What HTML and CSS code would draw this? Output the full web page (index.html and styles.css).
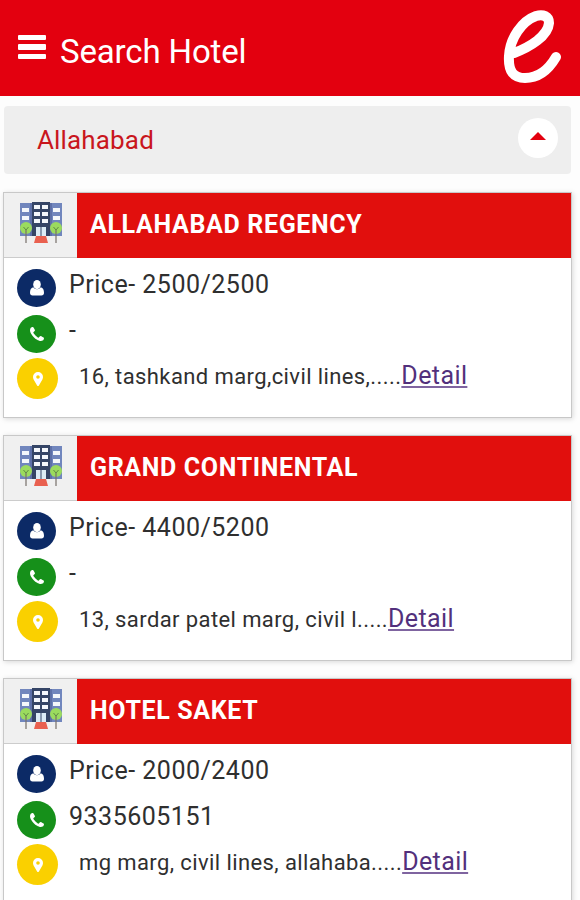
FILE: index.html
```
<!DOCTYPE html>
<html lang="en">
<head>
    <meta charset="UTF-8">
    <meta name="viewport" content="width=device-width, initial-scale=1.0">
    <title>Search Hotel</title>
    <link rel="stylesheet" href="styles.css">
</head>
<body>
    <!-- shared icons -->
    <svg class="sprite" width="0" height="0">
        <symbol id="hotel" viewBox="0 0 42 42">
            <path fill="#7186bd" d="M0 1h13v33H0zM29 1h13v33H29z"/>
            <path fill="#5d70a8" d="M10 1h3v33h-3zM29 1h3v33h-3z"/>
            <path fill="#354566" d="M12 0h18v34H12z"/>
            <path fill="#f4f7fb" d="M2 6h7v4H2zM2 14h7v4H2zM33 6h7v4h-7zM33 14h7v4h-7zM14 3h6v4h-6zM22 3h6v4h-6zM14 10h6v4h-6zM22 10h6v4h-6zM14 17h6v4h-6zM22 17h6v4h-6z"/>
            <path fill="#dcecf6" d="M16 25h4.500v10H16zM21.500 25H26v10h-4.500z"/>
            <path fill="#e9604f" d="M16 34h10l2 7H14z"/>
            <circle cx="6" cy="26" r="6" fill="#9bdb5e"/>
            <circle cx="36" cy="26" r="6" fill="#9bdb5e"/>
            <path fill="none" stroke="#77706a" stroke-width="1.200" d="M6 28v13M36 28v13"/>
            <path fill="none" stroke="#5f8a45" stroke-width="1" d="M3.500 25l2.500 3 2.500-3M33.500 25l2.500 3 2.500-3"/>
        </symbol>
        <symbol id="user" viewBox="0 0 14 16">
            <ellipse cx="7" cy="4.600" rx="3.800" ry="4.600"/>
            <path d="M3.200 7.200C1 7.700 0 9.700 0 12.800 0 14.600 1 15.500 2.500 15.500h9c1.500 0 2.500-.9 2.500-2.700 0-3.100-1-5.100-3.200-5.600-2 2.600-5.600 2.600-7.600 0z"/>
        </symbol>
        <symbol id="phone" viewBox="0 0 14 14">
            <path d="M14 11c0 .8-.4 1.800-.8 2.200-.8.600-1.800.8-2.600.8-1 0-2.500-.7-3.500-1.300C4.500 11.200 2.800 9.500 1.300 6.900.7 5.900 0 4.400 0 3.400 0 2.600.2 1.600.8.800 1.200.4 2.200 0 3 0c.5 0 1.800 2.800 2 3.300.2.700-1.700 1.700-1.700 2.300 0 .9 4.200 5.100 5.100 5.100.6 0 1.600-1.900 2.300-1.700.5.200 3.300 1.500 3.300 2z"/>
        </symbol>
        <symbol id="marker" viewBox="0 0 10 14">
            <path fill-rule="evenodd" d="M5 0a5 5 0 0 0-5 5c0 1 .3 1.800.6 2.400l3.500 6c.4.800 1.400.8 1.800 0l3.500-6C9.700 6.800 10 6 10 5a5 5 0 0 0-5-5zm0 3.200a1.800 1.800 0 1 1 0 3.600 1.800 1.800 0 0 1 0-3.600z"/>
        </symbol>
    </svg>

    <div class="header">
        <div class="menu">
            <span></span>
            <span></span>
            <span></span>
        </div>
        <h1>Search Hotel</h1>
        <svg class="logo" viewBox="0 0 60 76" width="60" height="76">
            <path d="M12 43C28 37 46 26 47 13 47 6 41 4 34 6 20 11 8 28 7 46 6 62 12 68 23 68 37 68 47 59 54 47"/>
        </svg>
    </div>

    <div class="city">
        <span>Allahabad</span>
        <div class="city-toggle">
            <svg viewBox="0 0 16 8" width="16" height="8"><path d="M0 8l8-8 8 8z"/></svg>
        </div>
    </div>

    <div class="hotel-card">
        <div class="hotel-head">
            <div class="hotel-icon"><svg width="42" height="42"><use href="#hotel"/></svg></div>
            <h2>ALLAHABAD REGENCY</h2>
        </div>
        <div class="hotel-info">
            <div class="row">
                <div class="circle blue"><svg width="14" height="16"><use href="#user"/></svg></div>
                <p>Price- 2500/2500</p>
            </div>
            <div class="row">
                <div class="circle green"><svg width="14" height="14"><use href="#phone"/></svg></div>
                <p>-</p>
            </div>
            <div class="row address">
                <div class="circle yellow"><svg width="10" height="14"><use href="#marker"/></svg></div>
                <p>16, tashkand marg,civil lines,.....<a href="#">Detail</a></p>
            </div>
        </div>
    </div>

    <div class="hotel-card">
        <div class="hotel-head">
            <div class="hotel-icon"><svg width="42" height="42"><use href="#hotel"/></svg></div>
            <h2>GRAND CONTINENTAL</h2>
        </div>
        <div class="hotel-info">
            <div class="row">
                <div class="circle blue"><svg width="14" height="16"><use href="#user"/></svg></div>
                <p>Price- 4400/5200</p>
            </div>
            <div class="row">
                <div class="circle green"><svg width="14" height="14"><use href="#phone"/></svg></div>
                <p>-</p>
            </div>
            <div class="row address">
                <div class="circle yellow"><svg width="10" height="14"><use href="#marker"/></svg></div>
                <p>13, sardar patel marg, civil l.....<a href="#">Detail</a></p>
            </div>
        </div>
    </div>

    <div class="hotel-card">
        <div class="hotel-head">
            <div class="hotel-icon"><svg width="42" height="42"><use href="#hotel"/></svg></div>
            <h2>HOTEL SAKET</h2>
        </div>
        <div class="hotel-info">
            <div class="row">
                <div class="circle blue"><svg width="14" height="16"><use href="#user"/></svg></div>
                <p>Price- 2000/2400</p>
            </div>
            <div class="row">
                <div class="circle green"><svg width="14" height="14"><use href="#phone"/></svg></div>
                <p>9335605151</p>
            </div>
            <div class="row address">
                <div class="circle yellow"><svg width="10" height="14"><use href="#marker"/></svg></div>
                <p>mg marg, civil lines, allahaba.....<a href="#">Detail</a></p>
            </div>
        </div>
    </div>
</body>
</html>
```
FILE: styles.css
```
* {
    box-sizing: border-box;
}
body {
    font-family: Roboto, sans-serif;
    background-color: #fdfdfd;
    color: #2f2f2f;
    margin: 0;
    height: 900px;
    overflow: hidden;
}
.sprite {
    display: block;
}
.header {
    display: flex;
    align-items: center;
    height: 96px;
    padding: 0 18px 0 18px;
    background-color: #e3000f;
}
.menu {
    display: flex;
    flex-direction: column;
    gap: 4px;
    margin: -2px 14px 0 0;
}
.menu span {
    width: 28px;
    height: 5.500px;
    border-radius: 1px;
    background-color: #fff;
}
.header h1 {
    margin: 7px auto 0 0;
    font-size: 33px;
    font-weight: 400;
    line-height: 40px;
    letter-spacing: -0.15px;
    color: #fff;
}
.logo {
    fill: none;
    stroke: #fff;
    stroke-width: 10;
    stroke-linecap: round;
    stroke-linejoin: round;
    overflow: visible;
}
.city {
    display: flex;
    align-items: center;
    justify-content: space-between;
    width: 567px;
    height: 68px;
    margin: 10px 0 18px 4px;
    padding: 0 13px 0 33px;
    border-radius: 4px;
    background-color: #eee;
    font-size: 26px;
    letter-spacing: 0.15px;
    color: #c9161d;
}
.city-toggle {
    display: flex;
    align-items: center;
    justify-content: center;
    width: 40px;
    height: 40px;
    margin-top: -4px;
    border-radius: 50%;
    background-color: #fff;
}
.city-toggle svg {
    fill: #e3000f;
    margin-top: -5px;
}
.hotel-card {
    width: 569px;
    height: 226px;
    margin: 0 0 17px 3px;
    border: 1px solid #c8c8c8;
    background-color: #fff;
    box-shadow: 1px 1px 5px rgba(0, 0, 0, 0.15);
}
.hotel-head {
    display: flex;
    height: 65px;
}
.hotel-icon {
    width: 73px;
    padding: 9px 0 0 16px;
    border-bottom: 1px solid #ccc;
    background-color: #f0f0f0;
}
.hotel-head h2 {
    flex: 1;
    margin: 0;
    padding-left: 13px;
    background-color: #e10f0d;
    font-size: 25px;
    font-weight: 700;
    line-height: 63px;
    letter-spacing: 0.65px;
    color: #fff;
}
.hotel-info {
    display: flex;
    flex-direction: column;
    gap: 8px;
    padding: 11px 0 0 13px;
}
.row {
    display: flex;
    align-items: center;
    height: 38px;
}
.row p {
    margin: -6px 0 0 13px;
    font-size: 25px;
    line-height: 32px;
    letter-spacing: 0.5px;
    white-space: nowrap;
}
.row.address {
    height: 41px;
    margin-top: -3px;
}
.row.address p {
    margin-top: -5px;
    margin-left: 21px;
    font-size: 22px;
    letter-spacing: 0.4px;
}
.row.address a {
    font-size: 25px;
    color: #52307c;
    text-underline-offset: 2px;
    text-decoration-thickness: 2px;
    text-decoration-color: #7f64a0;
}
.circle {
    display: flex;
    align-items: center;
    justify-content: center;
    width: 39px;
    height: 38px;
    border-radius: 50%;
    fill: #fff;
}
.blue {
    background-color: #0c2a66;
}
.green {
    background-color: #16901a;
}
.yellow {
    width: 41px;
    height: 41px;
    background-color: #fad000;
}
```
